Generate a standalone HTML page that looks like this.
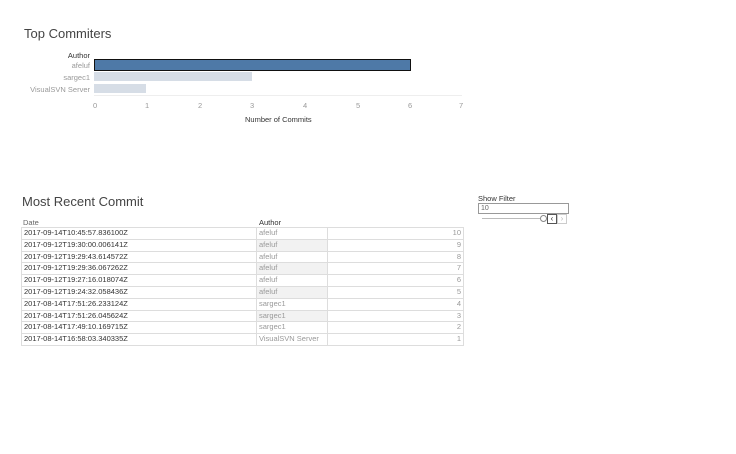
<!DOCTYPE html>
<html><head><meta charset="utf-8"><style>
body{margin:0;width:736px;height:454px;background:#fff;font-family:"Liberation Sans",sans-serif;position:relative;overflow:hidden}
.a{position:absolute;white-space:nowrap}
.t{font-size:13px;color:#444}
.s{font-size:7.5px;color:#999}
.k{font-size:7.5px;color:#333}
table{position:absolute;left:21px;top:227px;border-collapse:collapse;font-size:7.5px}
td{height:10.8px;padding:0 2px;border-bottom:1px solid #ddd;line-height:10.8px}
td.d{width:230px;color:#333;border-left:1px solid #ddd}
td.au{width:66px;color:#999;border-left:1px solid #ddd}
td.n{width:131px;color:#999;text-align:right;border-left:1px solid #ddd;border-right:1px solid #ddd}
tr.b td.au{background:#f2f2f2}
tr:first-child td{border-top:1px solid #ddd}
</style></head><body>
<div class="a t" style="left:24px;top:26px">Top Commiters</div>
<div class="a k" style="right:646px;top:51px">Author</div>
<div class="a s" style="right:646px;top:61px">afeluf</div>
<div class="a s" style="right:646px;top:73px">sargec1</div>
<div class="a s" style="right:646px;top:85px">VisualSVN Server</div>
<div class="a" style="left:94px;top:59px;width:315px;height:10px;background:#4e79a7;border:1.5px solid #111"></div>
<div class="a" style="left:94px;top:72px;width:158px;height:9px;background:#d6dde6"></div>
<div class="a" style="left:94px;top:84px;width:52px;height:9px;background:#d6dde6"></div>
<div class="a" style="left:94px;top:95px;width:368px;height:1px;background:#eee"></div>
<div class="a s" style="left:93px;top:101px">0</div>
<div class="a s" style="left:145px;top:101px">1</div>
<div class="a s" style="left:198px;top:101px">2</div>
<div class="a s" style="left:250px;top:101px">3</div>
<div class="a s" style="left:303px;top:101px">4</div>
<div class="a s" style="left:356px;top:101px">5</div>
<div class="a s" style="left:408px;top:101px">6</div>
<div class="a s" style="left:459px;top:101px">7</div>
<div class="a k" style="left:245px;top:115px">Number of Commits</div>
<div class="a t" style="left:22px;top:194px">Most Recent Commit</div>
<div class="a k" style="left:23px;top:218px;color:#666">Date</div>
<div class="a k" style="left:259px;top:218px">Author</div>
<table>
<tr><td class="d">2017-09-14T10:45:57.836100Z</td><td class="au">afeluf</td><td class="n">10</td></tr>
<tr class="b"><td class="d">2017-09-12T19:30:00.006141Z</td><td class="au">afeluf</td><td class="n">9</td></tr>
<tr><td class="d">2017-09-12T19:29:43.614572Z</td><td class="au">afeluf</td><td class="n">8</td></tr>
<tr class="b"><td class="d">2017-09-12T19:29:36.067262Z</td><td class="au">afeluf</td><td class="n">7</td></tr>
<tr><td class="d">2017-09-12T19:27:16.018074Z</td><td class="au">afeluf</td><td class="n">6</td></tr>
<tr class="b"><td class="d">2017-09-12T19:24:32.058436Z</td><td class="au">afeluf</td><td class="n">5</td></tr>
<tr><td class="d">2017-08-14T17:51:26.233124Z</td><td class="au">sargec1</td><td class="n">4</td></tr>
<tr class="b"><td class="d">2017-08-14T17:51:26.045624Z</td><td class="au">sargec1</td><td class="n">3</td></tr>
<tr><td class="d">2017-08-14T17:49:10.169715Z</td><td class="au">sargec1</td><td class="n">2</td></tr>
<tr><td class="d">2017-08-14T16:58:03.340335Z</td><td class="au">VisualSVN Server</td><td class="n">1</td></tr>
</table>
<div class="a k" style="left:478px;top:194px">Show Filter</div>
<div class="a" style="left:478px;top:203px;width:87px;height:9px;border:1px solid #999;font-size:7px;color:#666;line-height:9px;padding-left:2px;box-sizing:content-box">10</div>
<div class="a" style="left:482px;top:218px;width:58px;height:1px;background:#bbb"></div>
<div class="a" style="left:540px;top:215px;width:5px;height:5px;border:1px solid #888;border-radius:50%;background:#fff"></div>
<div class="a" style="left:547px;top:214px;width:8px;height:8px;border:1px solid #555;font-size:8px;line-height:8px;text-align:center;color:#333">&lsaquo;</div>
<div class="a" style="left:557px;top:214px;width:8px;height:8px;border:1px solid #ccc;font-size:8px;line-height:8px;text-align:center;color:#bbb">&rsaquo;</div>
</body></html>
